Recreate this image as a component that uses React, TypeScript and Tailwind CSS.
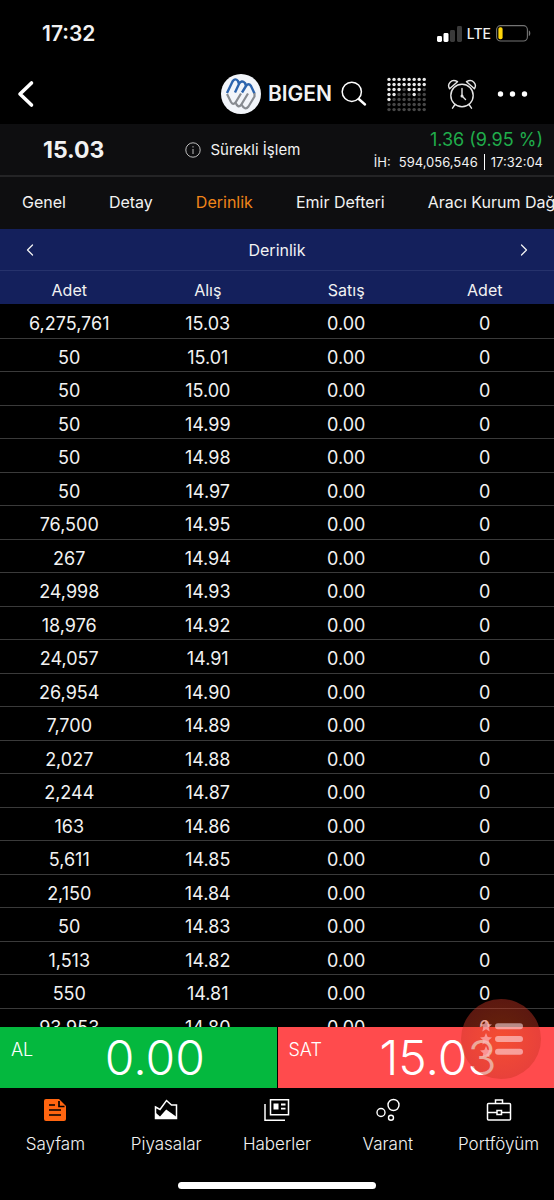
import React from 'react';
import { ChevronLeft, ChevronRight } from 'lucide-react';

const tabs = ['Genel', 'Detay', 'Derinlik', 'Emir Defteri', 'Aracı Kurum Dağılımı'];

const bids = [
  ['6,275,761', '15.03'],
  ['50', '15.01'],
  ['50', '15.00'],
  ['50', '14.99'],
  ['50', '14.98'],
  ['50', '14.97'],
  ['76,500', '14.95'],
  ['267', '14.94'],
  ['24,998', '14.93'],
  ['18,976', '14.92'],
  ['24,057', '14.91'],
  ['26,954', '14.90'],
  ['7,700', '14.89'],
  ['2,027', '14.88'],
  ['2,244', '14.87'],
  ['163', '14.86'],
  ['5,611', '14.85'],
  ['2,150', '14.84'],
  ['50', '14.83'],
  ['1,513', '14.82'],
  ['550', '14.81'],
  ['93,953', '14.80'],
];

// 1 = lit dot, 0 = dim dot
const dotRows = ['11111111', '11111111', '11101110', '11000100', '10000000', '00000000', '00000000'];

const StatusBar: React.FC = () => (
  <div className="flex h-[67px] shrink-0 items-center justify-between pl-[42px] pr-[23px]">
    <span className="text-[21px] font-semibold">17:32</span>
    <div className="flex items-center gap-[5px]">
      <svg width="25" height="16" viewBox="0 0 25 16" aria-hidden="true">
        <rect x="0" y="10" width="5" height="6" rx="1.4" fill="#fff" />
        <rect x="6.5" y="7" width="5" height="9" rx="1.4" fill="#fff" />
        <rect x="13" y="4" width="5" height="12" rx="1.4" fill="#3a3a3a" />
        <rect x="20" y="0" width="5" height="16" rx="1.4" fill="#3a3a3a" />
      </svg>
      <span className="text-sm font-medium">LTE</span>
      <svg width="35" height="17" viewBox="0 0 35 17" aria-hidden="true">
        <rect x="0.6" y="0.6" width="30.8" height="15.4" rx="4" fill="none" stroke="#747474" strokeWidth="1.1" />
        <rect x="2.4" y="2.3" width="4.2" height="12" rx="1.8" fill="#ffd60a" />
        <path d="M32.8 5.6c2 .5 2 5 0 5.5z" fill="#747474" />
      </svg>
    </div>
  </div>
);

const Logo: React.FC = () => (
  <svg width="40" height="40" viewBox="0 0 40 40" className="shrink-0" aria-hidden="true">
    <circle cx="20" cy="20" r="20" fill="#f2f5fa" />
    <path
      d="M6 19 11.500 7.500Q14 3.500 17 7L18 10 14 18.500M18 10Q20.500 5.500 24 9L25 12 21 18.500M25 12Q27.500 8.500 30 12L33.500 19.500"
      fill="none"
      stroke="#2c64ae"
      strokeWidth="2.4"
    />
    <path
      d="M6 20 10 28Q12 31.500 14.500 28.500L20 19.500M14.500 28.500Q17 34.500 20 31L27 19.500M20.500 30.500Q24 37 27.500 32.500L33.500 22.500V19"
      fill="none"
      stroke="#878b91"
      strokeWidth="2.2"
    />
  </svg>
);

const Header: React.FC = () => (
  <header className="flex h-[57px] shrink-0 items-center pr-[26px] pl-[17px] pb-[3px]">
    <button aria-label="Geri">
      <svg width="18" height="28" viewBox="0 0 18 28" fill="none" stroke="#fff" strokeWidth="3.6" strokeLinecap="round" strokeLinejoin="round">
        <path d="M14.500 3 3 14l11.500 11" />
      </svg>
    </button>
    <div className="ml-auto flex items-center gap-[7px]">
      <Logo />
      <h1 className="text-[21px] font-semibold">BIGEN</h1>
    </div>
    <button aria-label="Ara" className="ml-[9px]">
      <svg width="26" height="26" viewBox="0 0 26 26" fill="none" stroke="#fff">
        <circle cx="10.800" cy="10.800" r="9.600" strokeWidth="1.500" />
        <path d="m17.800 18 6.200 5.500" strokeWidth="2.400" strokeLinecap="round" />
      </svg>
    </button>
    <button aria-label="Isı haritası" className="ml-5">
      <svg width="40" height="35" viewBox="0 0 40 35">
        {dotRows.map((row, y) =>
          row.split('').map((dot, x) => (
            <circle key={`${x}-${y}`} cx={2 + x * 5.03} cy={2.4 + y * 5.03} r="1.7" fill={dot === '1' ? '#e8e8e8' : '#474747'} />
          ))
        )}
      </svg>
    </button>
    <button aria-label="Alarm" className="ml-5">
      <svg width="30" height="30" viewBox="0 0 30 30" fill="none" stroke="#e6e6e6" strokeWidth="1.4" strokeLinecap="round" strokeLinejoin="round">
        <circle cx="15" cy="16.500" r="11.200" />
        <path d="M15 9.500v7.500l3.500 3.500M8 25.500l-2.500 3.700M22 25.500l2.500 3.700" />
        <path d="M2.600 9.800C-.4 5 4.500-.8 10.500 2.700zM27.400 9.800c3-4.800-1.900-10.600-7.900-7.100z" />
        <circle cx="15" cy="17" r="0.800" />
      </svg>
    </button>
    <button aria-label="Daha fazla" className="ml-5">
      <svg width="31" height="6" viewBox="0 0 31 6" fill="#fff">
        <circle cx="3.500" cy="3" r="2.700" />
        <circle cx="15.500" cy="3" r="2.700" />
        <circle cx="27.500" cy="3" r="2.700" />
      </svg>
    </button>
  </header>
);

const QuoteBar: React.FC = () => (
  <section className="flex h-[53px] shrink-0 items-center border-b-2 border-[#242426] bg-[#0e0e10] pt-px pr-[11px] pl-[43px]">
    <span className="text-[23px] font-bold">15.03</span>
    <span className="ml-[81px] flex items-center gap-[9px] text-[15px]">
      <svg width="16" height="16" viewBox="0 0 16 16" fill="none" stroke="#bdbdbd" aria-hidden="true">
        <circle cx="8" cy="8" r="7.200" />
        <path d="M8 7v5M8 4.200v1.300" />
      </svg>
      Sürekli İşlem
    </span>
    <div className="ml-auto text-right">
      <p className="text-lg leading-6 text-[#20ac4b]">1.36 (9.95 %)</p>
      <p className="flex items-center justify-end text-[13px] leading-5">
        <span className="mr-2">İH:</span>
        <span>594,056,546</span>
        <span className="mx-1.5 h-4 w-px bg-white" />
        <span>17:32:04</span>
      </p>
    </div>
  </section>
);

const navIcons = {
  page: (
    <svg width="24" height="24" viewBox="0 0 24 24">
      <path d="M3 1h13l7 7v13a2 2 0 0 1-2 2H3a2 2 0 0 1-2-2V3a2 2 0 0 1 2-2z" fill="#ff6510" />
      <path d="M16 3v5.500h5.500M6 7h6M6 12h12M6 17h12" fill="none" stroke="#000" strokeWidth="1.700" />
    </svg>
  ),
  market: (
    <svg width="24" height="24" viewBox="0 0 24 24">
      <path d="M1.500 9l4.500 2.500L12.500 2.500l5 4.500h5v13.500h-21z" fill="none" stroke="#fff" strokeWidth="1.500" />
      <path d="M2 20.500V15l4 3.500 6.200-7L22 18.500v2z" fill="#fff" />
    </svg>
  ),
  news: (
    <svg width="26" height="24" viewBox="0 0 26 24" fill="none" stroke="#fff" strokeWidth="1.500">
      <path d="M6.500 1.800h18v15h-18zM1 6v16.200h20" />
      <path d="M9.500 5.500h5v6h-5zM17 5.500h4.500v2H17zM17 9.800h4.500v1.700H17z" fill="#fff" stroke="none" />
    </svg>
  ),
  warrant: (
    <svg width="24" height="24" viewBox="0 0 24 24" fill="none" stroke="#fff" strokeWidth="1.400">
      <circle cx="17.500" cy="7" r="5.500" />
      <circle cx="5" cy="14.500" r="4" />
      <circle cx="15" cy="19.800" r="2.500" />
    </svg>
  ),
  portfolio: (
    <svg width="26" height="24" viewBox="0 0 26 24" fill="none" stroke="#fff" strokeWidth="1.500">
      <rect x="1.500" y="5.500" width="23" height="16.500" rx="1" />
      <path d="M9.500 5.500v-3.500h7v3.500M1.500 14.500H11M15.500 14.500h9M11 12.500h4.500v4H11z" />
    </svg>
  ),
};

const navItems = [
  { label: 'Sayfam', icon: navIcons.page },
  { label: 'Piyasalar', icon: navIcons.market },
  { label: 'Haberler', icon: navIcons.news },
  { label: 'Varant', icon: navIcons.warrant },
  { label: 'Portföyüm', icon: navIcons.portfolio },
];

const star = 'm0-6 1.700 4 4.300.400-3.300 2.800 1 4.300L0 3.200l-3.700 2.300 1-4.300L-6-1.600l4.300-.4z';

const FloatingMenu: React.FC = () => (
  <button
    aria-label="Menü"
    className="absolute -top-7 right-[13px] size-20 rounded-full bg-radial from-[#e8500c]/45 to-[#c02828]/45"
  >
    <svg width="80" height="80" viewBox="0 0 80 80">
      <path d="M37 27.300h22M37 40h22M37 52.700h22" stroke="#ffe8ee" strokeOpacity="0.55" strokeWidth="6" strokeLinecap="round" />
      <g fill="#ffb5ba" fillOpacity="0.7">
        <path transform="translate(25 27)" d={star} />
        <path transform="translate(25 40)" d={star} />
        <path transform="translate(25 53)" d={star} />
      </g>
    </svg>
  </button>
);

const App: React.FC = () => {
  return (
    <div className="flex h-screen flex-col overflow-hidden bg-black font-['Inter',sans-serif] text-[#f2f2f2]">
      <StatusBar />
      <Header />
      <QuoteBar />

      <nav className="flex h-[52px] shrink-0 items-center gap-[43px] overflow-hidden bg-[#0e0e10] pb-0.5 pl-[22px] text-base whitespace-nowrap">
        {tabs.map((tab) => (
          <a key={tab} href="#" className={tab === 'Derinlik' ? 'text-[#f08519]' : ''}>
            {tab}
          </a>
        ))}
      </nav>

      <div className="flex h-[42px] shrink-0 items-center justify-between border-b border-[#26326c] bg-[#14205c] px-5">
        <button aria-label="Önceki">
          <ChevronLeft size={20} strokeWidth={1.5} />
        </button>
        <h2 className="text-base">Derinlik</h2>
        <button aria-label="Sonraki">
          <ChevronRight size={20} strokeWidth={1.5} />
        </button>
      </div>

      <main className="min-h-0 flex-1 overflow-hidden">
        <table className="w-full table-fixed border-collapse text-center">
          <thead>
            <tr className="h-[33px] bg-[#14205c] text-base">
              <th className="p-0 pt-1 font-normal">Adet</th>
              <th className="p-0 pt-1 font-normal">Alış</th>
              <th className="p-0 pt-1 font-normal">Satış</th>
              <th className="p-0 pt-1 font-normal">Adet</th>
            </tr>
          </thead>
          <tbody className="text-lg leading-6">
            {bids.map(([amount, price]) => (
              <tr key={price} className="border-b border-[#3a3a3a] odd:h-[34px] even:h-[33px]">
                <td className="p-0 pt-1.5">{amount}</td>
                <td className="p-0 pt-1.5">{price}</td>
                <td className="p-0 pt-1.5">0.00</td>
                <td className="p-0 pt-1.5">0</td>
              </tr>
            ))}
          </tbody>
        </table>
      </main>

      <div className="relative grid h-[61px] shrink-0 grid-cols-2 gap-px text-white">
        <button className="flex items-start bg-[#04b83e] pl-[11px]">
          <span className="pt-[11px] text-lg leading-6 font-light">AL</span>
          <span className="flex-1 text-5xl leading-[61px] font-light">0.00</span>
        </button>
        <button className="flex items-start bg-[#ff4b4d] pl-[11px]">
          <span className="pt-[11px] text-lg leading-6 font-light">SAT</span>
          <span className="flex-1 text-5xl leading-[61px] font-light">15.03</span>
        </button>
        <FloatingMenu />
      </div>

      <footer className="flex h-28 shrink-0 flex-col items-center justify-between pt-2.5 pb-[11px]">
        <nav className="grid w-full grid-cols-5">
          {navItems.map((item) => (
            <a key={item.label} href="#" className="flex flex-col items-center gap-2.5 text-[17px] font-light">
              {item.icon}
              {item.label}
            </a>
          ))}
        </nav>
        <div className="h-[7px] w-[198px] rounded-full bg-white" />
      </footer>
    </div>
  );
};

export default App;
